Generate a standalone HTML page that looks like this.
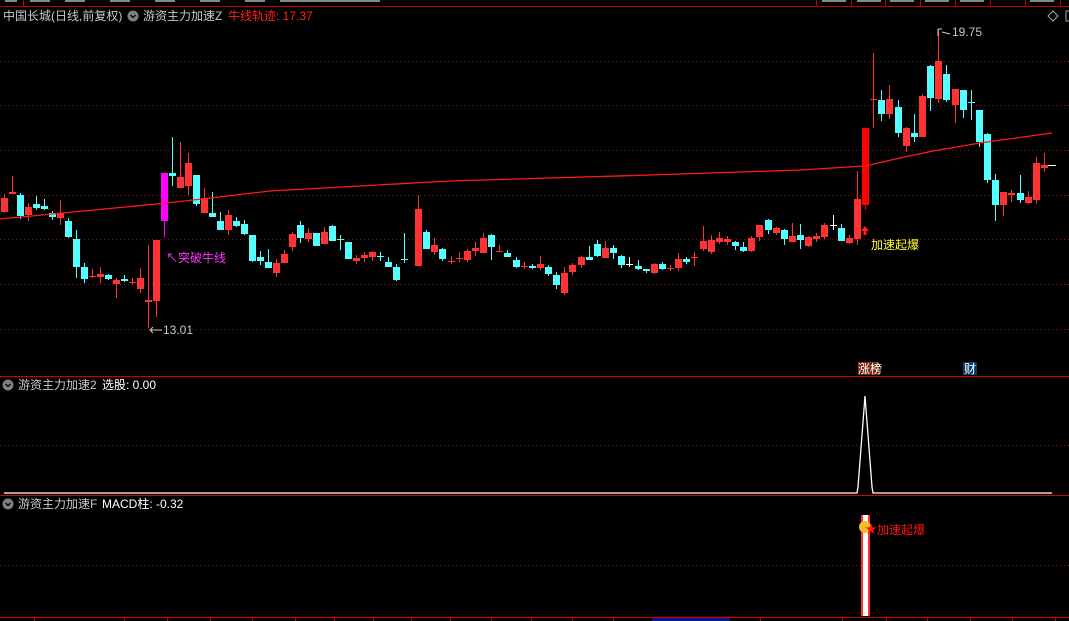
<!DOCTYPE html>
<html><head><meta charset="utf-8">
<style>
html,body{margin:0;padding:0;background:#000;width:1069px;height:621px;overflow:hidden}
svg{display:block}
text{font-family:"Liberation Sans","Noto Sans CJK SC",sans-serif;font-size:12px}
</style></head><body>
<svg id="s" width="1069" height="621" xmlns="http://www.w3.org/2000/svg">
<rect width="1069" height="621" fill="#000"/>
<!-- top strip -->
<line x1="0" y1="6.5" x2="1069" y2="6.5" stroke="#c00000"/>
<g stroke="#c00000"><line x1="23.5" y1="0" x2="23.5" y2="6"/><line x1="816.5" y1="0" x2="816.5" y2="6"/><line x1="851.5" y1="0" x2="851.5" y2="6"/><line x1="885.5" y1="0" x2="885.5" y2="6"/><line x1="920.5" y1="0" x2="920.5" y2="6"/><line x1="955.5" y1="0" x2="955.5" y2="6"/><line x1="990.5" y1="0" x2="990.5" y2="6"/><line x1="1025.5" y1="0" x2="1025.5" y2="6"/><line x1="1060.5" y1="0" x2="1060.5" y2="6"/></g>
<g fill="#888"><rect x="5" y="0" width="12" height="2"/><rect x="30" y="0" width="20" height="2"/><rect x="65" y="0" width="20" height="2"/><rect x="110" y="0" width="20" height="2"/><rect x="155" y="0" width="20" height="2"/><rect x="200" y="0" width="20" height="2"/><rect x="245" y="0" width="20" height="2"/><rect x="280" y="0" width="100" height="2"/><rect x="822" y="0" width="24" height="2"/><rect x="857" y="0" width="24" height="2"/><rect x="890" y="0" width="24" height="2"/><rect x="925" y="0" width="24" height="2"/><rect x="960" y="0" width="24" height="2"/><rect x="1030" y="0" width="24" height="2"/></g>
<g id="grid" stroke="#8a1010" stroke-dasharray="1,3"></g>
<g id="candles"></g>
<polyline fill="none" stroke="#ff1a1a" stroke-width="1.3" points="0,219 167,203 270,191 450,181 650,175 800,170 865,166 900,158 933,151 980,143 1052,133"/>
<!-- headers -->
<text x="3" y="20" fill="#c8c8c8">中国长城(日线,前复权)</text>
<circle cx="133" cy="16" r="5.5" fill="#808080"/><path d="M130.5 15 L133 17.5 L135.5 15" stroke="#000" stroke-width="1.3" fill="none"/>
<text x="143" y="20" fill="#c8c8c8">游资主力加速Z</text>
<text x="228" y="20" fill="#ff2020">牛线轨迹: 17.37</text>
<path d="M1048 16 L1053 11 L1058 16 L1053 21 Z" stroke="#aaa" fill="none"/>
<rect x="1066" y="11" width="5" height="10" stroke="#aaa" fill="none"/>
<!-- annotations -->
<text x="952" y="36" fill="#c8c8c8">19.75</text>
<path d="M938 29 L938 36 M938 29 L942 29 M942 32 L950 34" stroke="#ccc" fill="none"/>
<text x="163" y="334" fill="#c8c8c8">13.01</text>
<path d="M150 330 L162 330 M150 330 L153 327 M150 330 L153 333" stroke="#ccc" fill="none"/>
<text x="166" y="262" fill="#ff33ff" font-size="13">↖突破牛线</text>
<text x="871" y="249" fill="#ffff33" font-size="13">加速起爆</text>
<path d="M865 226 L861 231 L863.5 231 L863.5 235 L866.5 235 L866.5 231 L869 231 Z" fill="#ff2020"/>
<!-- panel separators -->
<line x1="0" y1="376.5" x2="1069" y2="376.5" stroke="#d00000"/>
<rect x="858" y="362" width="21" height="13" fill="#7a2a10"/><text x="858" y="373" fill="#fff" font-size="11">涨榜</text>
<rect x="963" y="362" width="14" height="13" fill="#0a3a6a"/><text x="964" y="373" fill="#fff" font-size="11">财</text>
<circle cx="8" cy="385" r="5.5" fill="#808080"/><path d="M5.5 384 L8 386.5 L10.5 384" stroke="#000" stroke-width="1.3" fill="none"/>
<text x="18" y="389" fill="#c8c8c8">游资主力加速2</text><text x="102" y="389" fill="#fff">选股: 0.00</text>
<line x1="0" y1="445.5" x2="1069" y2="445.5" stroke="#8a1010" stroke-dasharray="1,3"/>
<polyline fill="none" stroke="#fff" stroke-width="1.3" points="4,493 857,493 858,487 865,396 872,487 873,493 1052,493"/>
<line x1="0" y1="495.5" x2="1069" y2="495.5" stroke="#d00000"/>
<circle cx="8" cy="504" r="5.5" fill="#808080"/><path d="M5.5 503 L8 505.5 L10.5 503" stroke="#000" stroke-width="1.3" fill="none"/>
<text x="18" y="508" fill="#c8c8c8">游资主力加速F</text><text x="102" y="508" fill="#fff">MACD柱: -0.32</text>
<line x1="0" y1="565.5" x2="1069" y2="565.5" stroke="#8a1010" stroke-dasharray="1,3"/>
<rect x="861" y="515" width="9" height="101" fill="#ff3030"/><rect x="863" y="515" width="5" height="101" fill="#fff"/>
<circle cx="865" cy="527" r="6" fill="#f0c020"/>
<text x="865" y="533" fill="#ff1010" font-size="12">★</text>
<text x="877" y="534" fill="#ff1010" font-size="13">加速起爆</text>
<line x1="0" y1="617.5" x2="1069" y2="617.5" stroke="#d00000"/>
<g stroke="#d00000" id="ticks"></g>
<rect x="652" y="618" width="78" height="3" fill="#101090"/>
</svg>
<script>
var NS="http://www.w3.org/2000/svg";
function el(p,t,a){var e=document.createElementNS(NS,t);for(var k in a)e.setAttribute(k,a[k]);p.appendChild(e);return e;}
var g=document.getElementById('grid');
[61,105,150,195,239,284,329].forEach(function(y){el(g,'line',{x1:0,y1:y+.5,x2:1069,y2:y+.5});});
var tk=document.getElementById('ticks');
[34,124,167,210,252,295,334,373,411,450,491,531,572,613,652,729,760,842,886,927,970,1012,1055].forEach(function(x){el(tk,'line',{x1:x+.5,y1:617,x2:x+.5,y2:621});});
// [x, type(r/c/w/m/R), bodyTop, bodyBot, high, low]
var D=[
[4,'r',198,212,194,213],[12,'r',192,194,176,194],[20,'c',195,216,193,219],[28,'r',207,215,203,221],[36,'c',204,208,196,210],[44,'c',206,209,199,210],[52,'c',213,217,211,220],[60,'r',213,218,200,225],
[68,'c',221,237,218,238],[76,'c',239,267,230,278],[84,'c',267,279,263,283],[92,'r',276,277,269,278],[100,'r',274,277,267,283],[108,'c',275,279,274,280],[116,'r',280,284,278,298],[124,'c',279,281,275,282],
[132,'r',282,283,278,285],[140,'r',278,289,268,293],[148,'r',300,302,245,328],[156,'r',240,301,240,317],[164,'m',173,221,173,237],[172,'c',173,176,137,186],[180,'r',177,188,142,188],[188,'r',163,186,153,195],
[196,'c',175,204,175,206],[204,'r',198,213,188,213],[212,'c',213,217,192,217],[220,'c',221,230,212,230],[228,'r',215,230,210,235],[236,'c',221,226,217,227],[244,'c',224,234,220,235],[252,'c',235,261,235,262],
[260,'c',257,261,251,265],[268,'c',262,268,249,268],[276,'r',263,273,259,277],[284,'r',254,263,250,263],[292,'r',234,247,232,251],[300,'c',225,238,221,243],[308,'r',233,239,228,242],[316,'c',233,246,233,246],
[324,'r',232,244,227,244],[332,'c',226,241,225,241],[340,'c',239,240,235,250],[348,'c',242,259,242,259],[356,'r',258,261,255,264],[364,'r',255,258,252,262],[372,'r',252,257,251,261],[380,'c',256,257,252,261],
[388,'c',262,267,257,267],[396,'c',267,280,264,281],[404,'c',259,260,233,263],[418,'r',209,266,195,266],[426,'c',232,249,230,249],[434,'r',245,252,238,255],[442,'c',249,259,248,261],[451,'r',261,262,256,264],
[459,'r',258,259,252,262],[467,'r',251,260,249,262],[475,'r',248,251,242,256],[483,'r',238,253,233,253],[491,'c',235,247,234,260],[499,'r',251,252,245,252],[507,'c',253,257,250,257],[516,'c',260,267,257,268],
[524,'r',266,267,262,269],[532,'c',266,268,264,269],[540,'r',264,268,256,270],[548,'c',267,274,265,276],[556,'c',275,285,272,289],[564,'r',273,293,267,295],[572,'r',265,272,263,275],[581,'r',257,265,256,268],
[589,'c',257,260,246,260],[597,'c',244,256,240,257],[605,'r',248,258,241,258],[613,'c',248,253,245,259],[621,'c',256,265,255,268],[629,'w',264,265,257,267],[638,'c',266,269,260,270],[646,'c',269,271,269,273],
[654,'r',264,273,263,274],[662,'c',264,269,262,270],[670,'r',268,269,265,271],[678,'r',259,268,253,271],[686,'c',259,262,257,264],[694,'r',257,258,252,266],[703,'r',241,249,226,251],[711,'r',240,252,235,254],
[719,'r',238,242,232,244],[727,'r',239,242,236,245],[735,'c',242,246,241,250],[743,'c',247,251,242,252],[751,'r',238,251,236,252],[759,'r',225,237,225,241],[768,'c',220,230,219,234],[776,'r',228,233,227,235],
[784,'c',230,239,229,245],[792,'r',236,242,223,242],[800,'c',235,240,224,249],[808,'r',237,246,236,247],[816,'r',236,239,233,242],[824,'r',225,237,223,239],[833,'w',225,226,215,230],[841,'c',228,241,224,241],
[849,'r',238,243,235,244],[857,'r',199,239,171,245],[865,'R',128,205,128,210],[873,'r',99,100,53,128],[881,'c',100,114,90,121],[889,'r',99,114,85,119],[898,'c',107,133,100,137],[906,'r',128,146,127,152],
[914,'c',133,137,114,142],[922,'r',96,137,94,137],[930,'c',66,98,65,111],[938,'r',61,99,29,103],[946,'c',74,100,65,102],[955,'r',89,105,89,123],[963,'c',90,110,90,118],[971,'c',102,103,90,120],
[979,'c',110,142,110,147],[987,'c',134,180,133,183],[995,'c',180,205,174,221],[1003,'r',192,205,192,216],[1011,'r',193,195,190,202],[1020,'c',193,200,175,203],[1028,'r',197,203,191,204],[1036,'r',163,200,157,204],
[1044,'r',165,168,153,172],[1052,'w',165,166,165,166]];
var C={r:'#ff3333',c:'#54ffff',w:'#ffffff',m:'#ff00ff',R:'#ff0000'};
var cg=document.getElementById('candles');
D.forEach(function(d){var x=d[0],col=C[d[1]];
 if(d[0]==1052){el(cg,'rect',{x:1048,y:165,width:8,height:1,fill:col});return;}
 el(cg,'rect',{x:x,y:d[4],width:1,height:Math.max(1,d[5]-d[4]),fill:col});
 var h=d[3]-d[2];if(h<2){el(cg,'rect',{x:x-3,y:d[2],width:7,height:1,fill:col});}
 else el(cg,'rect',{x:x-3,y:d[2],width:7,height:h,fill:col});
});
</script>
</body></html>
